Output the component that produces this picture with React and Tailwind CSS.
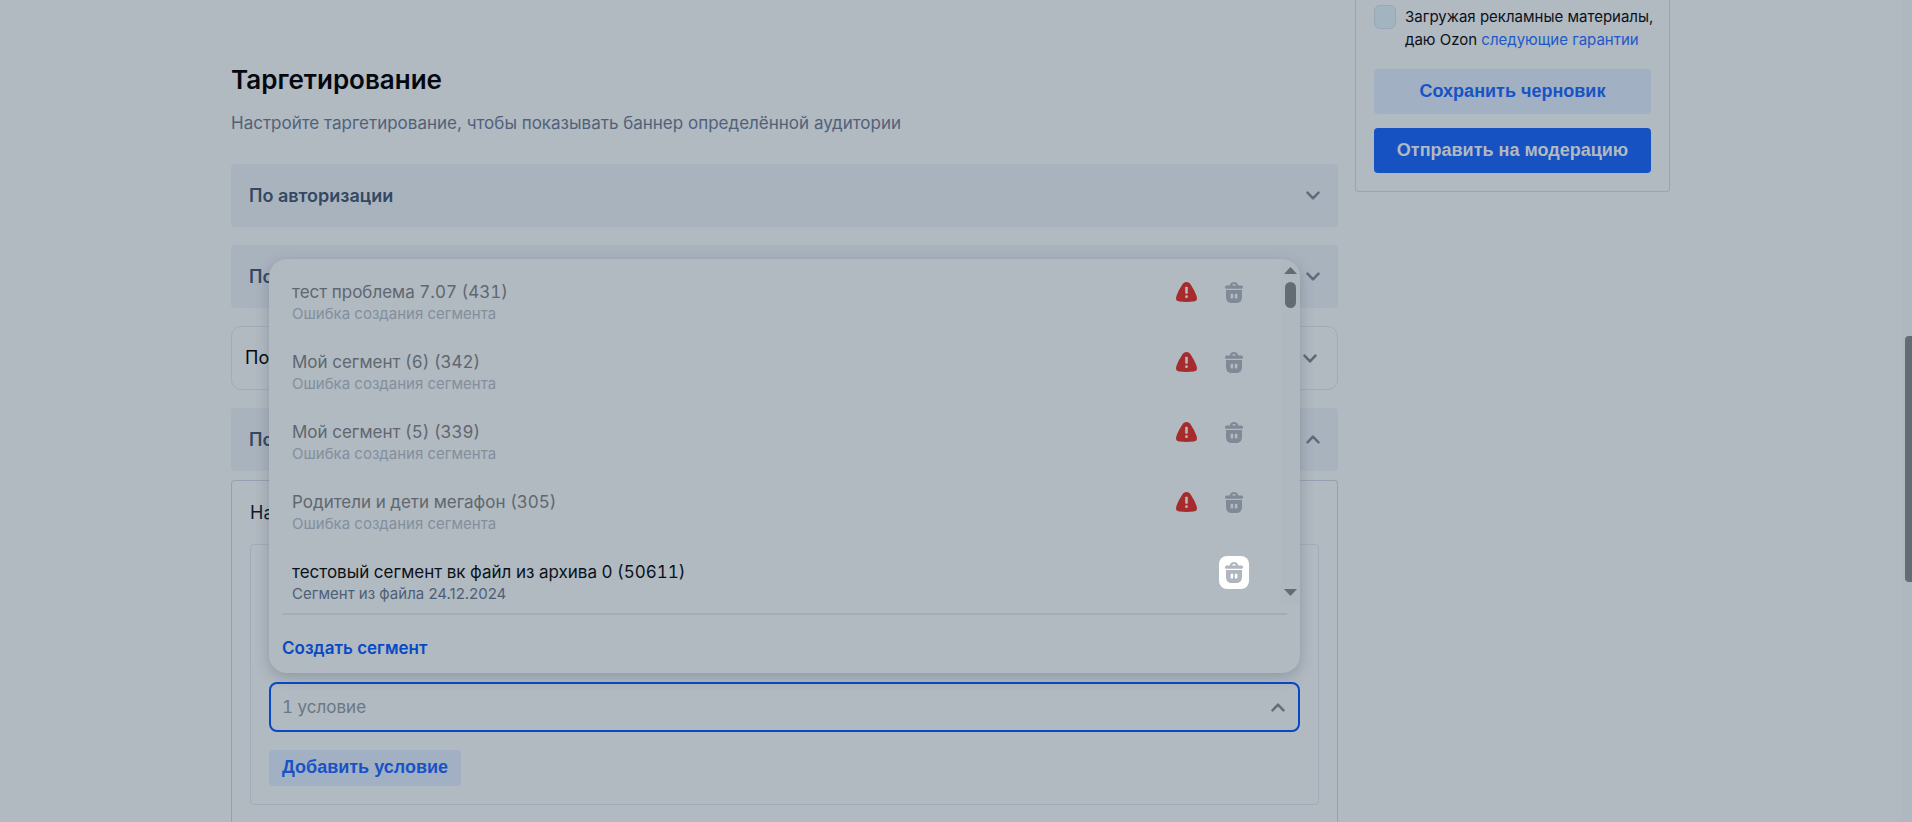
import React from "react";

const segments = [
  { id: 431, title: "тест проблема 7.07 (431)", note: "Ошибка создания сегмента", failed: true },
  { id: 342, title: "Мой сегмент (6) (342)", note: "Ошибка создания сегмента", failed: true },
  { id: 339, title: "Мой сегмент (5) (339)", note: "Ошибка создания сегмента", failed: true },
  { id: 305, title: "Родители и дети мегафон (305)", note: "Ошибка создания сегмента", failed: true },
  { id: 50611, title: "тестовый сегмент вк файл из архива 0 (50611)", note: "Сегмент из файла 24.12.2024", failed: false },
];

const Chevron = ({ up, className = "" }) => (
  <svg width="14" height="9" viewBox="0 0 14 9" fill="none" className={className} aria-hidden="true">
    <path
      d={up ? "M1.5 7.3 7 1.7l5.5 5.6" : "M1.5 1.7 7 7.3l5.5-5.6"}
      stroke="currentColor"
      strokeWidth="2.5"
      strokeLinecap="round"
      strokeLinejoin="round"
    />
  </svg>
);

const WarningIcon = () => (
  <svg width="21" height="20" viewBox="0 0 21 20" aria-hidden="true">
    <path
      d="M10.5 0C8.6 0 7.3.9 6.2 2.7 4 6.2 1.8 9.9.6 13.6c-.5 1.6-.8 3.1-.3 4.2.5 1.2 1.7 1.6 3.2 1.8 2.3.3 4.6.4 7 .4s4.7-.1 7-.4c1.5-.2 2.7-.6 3.2-1.8.5-1.1.2-2.6-.3-4.2-1.2-3.7-3.4-7.4-5.6-10.9C13.7.9 12.4 0 10.5 0z"
      fill="#a52b2c"
    />
    <rect x="9.2" y="4.8" width="2.6" height="7" rx=".8" fill="#b1b9c1" />
    <rect x="9.2" y="13.3" width="2.6" height="2.6" rx="1" fill="#b1b9c1" />
  </svg>
);

const TrashIcon = () => (
  <svg width="18" height="21" viewBox="0 0 18 21" fill="currentColor" aria-hidden="true">
    <path d="M9 0C7.200 0 5.900.9 5.200 2.300L4.700 3.400H1.500a1.500 1.500 0 0 0-1.500 1.500v.6c0 .8.7 1.300 1.500 1.300h15c.8 0 1.500-.5 1.500-1.300v-.6a1.500 1.500 0 0 0-1.500-1.500h-3.200l-.5-1.100C12.100.9 10.800 0 9 0zm0 1.900c.9 0 1.400.4 1.700 1.500H7.300C7.600 2.300 8.100 1.900 9 1.900z" />
    <path
      fillRule="evenodd"
      d="M1 8h16v6.500c0 4.400-2 6.500-5.500 6.500h-5C3 21 1 18.900 1 14.500V8zm5.600 3.800c-.7 0-1 .4-1 1v2.700c0 .6.3 1 1 1h.6c.6 0 1-.4 1-1v-2.700c0-.6-.4-1-1-1h-.6zm4.200 0c-.7 0-1 .4-1 1v2.700c0 .6.300 1 1 1h.6c.6 0 1-.4 1-1v-2.700c0-.6-.4-1-1-1h-.6z"
    />
  </svg>
);

const Section = ({ title, open }) => (
  <button
    type="button"
    className="flex h-[63px] w-full items-center justify-between rounded bg-[#a9b3be] px-[18px] text-lg font-semibold text-[#334862]"
  >
    {title}
    <Chevron up={open} className="text-[#5d6c7e]" />
  </button>
);

const SegmentRow = ({ segment }) => (
  <li className="flex h-[70px] items-start">
    <div className="flex-1">
      <div
        className={
          segment.failed
            ? "text-[17px] leading-6 tabular-nums text-[#5f676f]"
            : "text-[17px] leading-6 tabular-nums text-[#0b1119]"
        }
      >
        {segment.title}
      </div>
      <div className={segment.failed ? "text-[15px] leading-5 text-[#828f9d]" : "text-[15px] leading-5 text-[#4d6076]"}>
        {segment.note}
      </div>
    </div>
    {segment.failed && (
      <span className="mr-[21px] flex h-6 w-6 items-center justify-center">
        <WarningIcon />
      </span>
    )}
    <button
      type="button"
      aria-label="Удалить сегмент"
      className={
        segment.failed
          ? "-mt-1 flex h-[33px] w-[30px] items-center justify-center text-[#7f8a96]"
          : "-mt-1 flex h-[33px] w-[30px] items-center justify-center rounded-lg bg-white text-[#afb6be]"
      }
    >
      <TrashIcon />
    </button>
  </li>
);

const SegmentMenu = () => (
  <div className="absolute inset-x-0 bottom-full z-10 mb-[9px] overflow-hidden rounded-[18px] bg-[#b1b9c1] shadow-[0_4px_14px_rgba(60,75,95,0.3)]">
    <div className="flex h-[345px]">
      <ul className="flex-1 overflow-hidden pl-[23px] pr-8 pt-[21px]">
        {segments.map((s) => (
          <SegmentRow key={s.id} segment={s} />
        ))}
      </ul>
      {/* Scroll track */}
      <div className="flex w-[19px] flex-col items-center bg-[#afb7bf] pb-2 pt-2 text-[#636b73]">
        <svg width="13" height="7" viewBox="0 0 13 7" fill="currentColor" aria-hidden="true">
          <path d="M6.5 0 13 7H0z" />
        </svg>
        <div className="mt-2 h-[26px] w-[11px] rounded-full bg-[#636b73]" />
        <svg width="13" height="7" viewBox="0 0 13 7" fill="currentColor" className="mt-auto" aria-hidden="true">
          <path d="M6.5 7 0 0h13z" />
        </svg>
      </div>
    </div>
    <div className="mx-[13px] mt-[9px] border-t-2 border-[#a1adb9] pb-[13px] pt-[21px]">
      <button type="button" className="block text-[17px] font-semibold leading-6 text-[#0849c4]">
        Создать сегмент
      </button>
    </div>
  </div>
);

const Sidebar = () => (
  <aside className="w-[315px] self-start rounded-b border border-t-0 border-[#98a6b4] px-[18px] pb-[18px] pt-[5px]">
    <div className="flex gap-[9px]">
      <input
        id="guarantee"
        type="checkbox"
        className="h-6 w-[22px] shrink-0 appearance-none rounded-md border border-[#95a8b8] bg-[#a2b4c0]"
      />
      <label htmlFor="guarantee" className="whitespace-nowrap text-[15px] leading-[23px] text-[#0b1119]">
        Загружая рекламные материалы,
        <br />
        даю Ozon{" "}
        <a href="#guarantee" className="text-[#1d58c8]">
          следующие гарантии
        </a>
      </label>
    </div>
    <div className="mt-[18px] flex flex-col gap-[14px] font-['Liberation_Sans',Arial,sans-serif] text-lg font-bold">
      <button type="button" className="h-[45px] rounded bg-[#a2b0c3] pb-0.5 text-[#1753c6]">
        Сохранить черновик
      </button>
      <button type="button" className="h-[45px] rounded bg-[#1752c3] pb-0.5 text-[#b1b9c1]">
        Отправить на модерацию
      </button>
    </div>
  </aside>
);

const App = () => {
  return (
    <div className="flex h-screen overflow-hidden bg-[#b1b9c1] font-[Inter,sans-serif]">
      <div className="flex-1">
        <div className="mx-auto flex max-w-[1439px] gap-[17px]">
          <main className="flex-1 pt-[60px]">
            <h1 className="text-[26px] font-semibold leading-10 text-[#04090f]">Таргетирование</h1>
            <p className="mt-[11px] text-[17px] leading-6 text-[#50627a]">
              Настройте таргетирование, чтобы показывать баннер определённой аудитории
            </p>

            <div className="mt-[29px] flex flex-col gap-[18px]">
              <Section title="По авторизации" />
              <Section title="По" />
              <button
                type="button"
                className="flex h-16 w-full items-center justify-between rounded-[10px] border border-[#a0acb8] px-[13px] text-lg text-[#04090f]"
              >
                По
                <Chevron className="mr-[7px] text-[#5c6975]" />
              </button>
              <Section title="По" open />
            </div>

            {/* Audience conditions */}
            <section className="mt-[9px] rounded-t border border-b-0 border-[#93a1b1] px-[18px] pb-16 pt-5">
              <h2 className="text-lg leading-6 text-[#0d1a2b]">На</h2>
              <div className="mt-[19px] rounded border border-[#a0acb9] px-[18px] pb-[18px] pt-[137px]">
                <div className="relative">
                  <SegmentMenu />
                  <div className="flex h-[50px] items-center rounded-lg border-2 border-[#0748c6] pl-[11px] pr-[13px]">
                    <input
                      type="text"
                      aria-label="Сегмент"
                      placeholder="1 условие"
                      className="h-full flex-1 bg-transparent text-[17px] tabular-nums outline-none placeholder:text-[#6a7885]"
                    />
                    <Chevron up className="text-[#626f7c]" />
                  </div>
                </div>
                <button
                  type="button"
                  className="mt-[18px] block h-9 rounded bg-[#a2b0c3] px-[13px] pb-0.5 font-['Liberation_Sans',Arial,sans-serif] text-lg font-bold text-[#1753c6]"
                >
                  Добавить условие
                </button>
              </div>
            </section>
          </main>
          <Sidebar />
        </div>
      </div>
      {/* Page scrollbar */}
      <div className="w-[11px] bg-[#afb7bf] pl-1 pt-[336px]">
        <div className="h-[246px] rounded-l bg-[#636c75]" />
      </div>
    </div>
  );
};

export default App;
